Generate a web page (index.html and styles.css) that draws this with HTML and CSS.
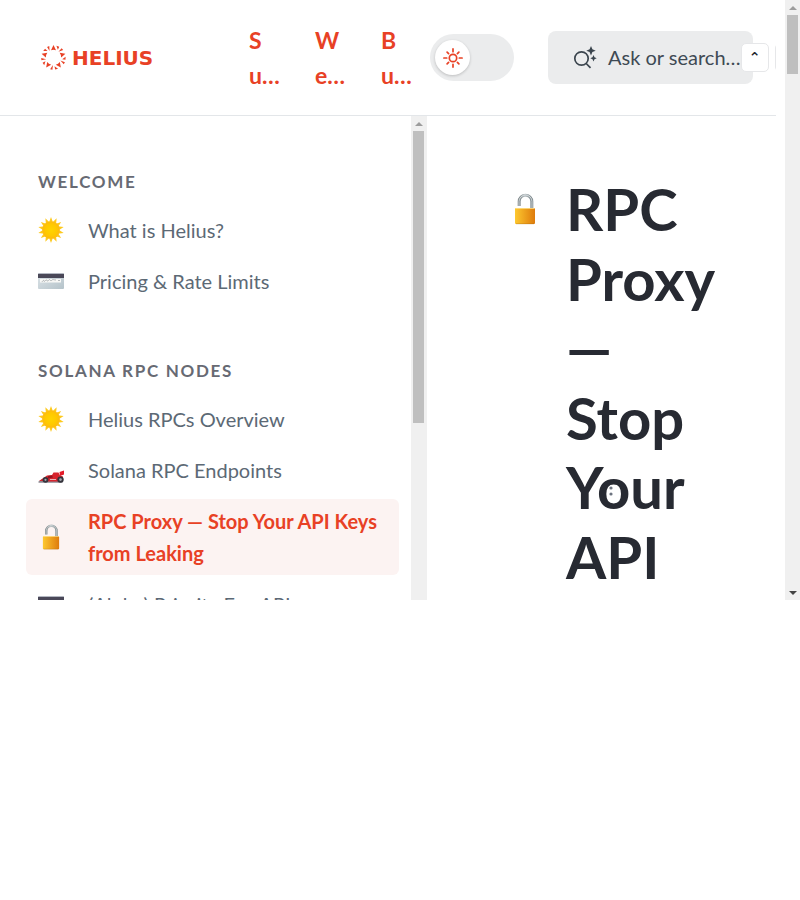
FILE: index.html
```html
<!DOCTYPE html>
<html lang="en">
<head>
<meta charset="utf-8">
<meta name="viewport" content="width=device-width, initial-scale=1">
<title>RPC Proxy | Helius Docs</title>
<link rel="stylesheet" href="styles.css">
</head>
<body>
<svg class="defs" aria-hidden="true">
  <defs>
    <linearGradient id="gold"><stop offset="0" stop-color="#fdc82f"/><stop offset="1" stop-color="#de7b0c"/></linearGradient>
    <linearGradient id="steel"><stop offset="0" stop-color="#7d8689"/><stop offset=".45" stop-color="#b9c1c4"/><stop offset="1" stop-color="#7d888c"/></linearGradient>
    <radialGradient id="sunfill"><stop offset="0" stop-color="#ffd400"/><stop offset=".7" stop-color="#ffc800"/><stop offset="1" stop-color="#fdb813"/></radialGradient>
    <linearGradient id="cardfill" x2="1" y2="1"><stop offset="0" stop-color="#dde4e8"/><stop offset="1" stop-color="#b5c3ca"/></linearGradient>
    <symbol id="sun" viewBox="0 0 26 26">
      <g fill="#fdc91c">
        <path id="spike" d="M13 0l2.200 6h-4.400zM13 26l2.200-6h-4.400z"/>
        <use href="#spike" transform="rotate(25.700 13 13)"/><use href="#spike" transform="rotate(51.400 13 13)"/>
        <use href="#spike" transform="rotate(77.100 13 13)"/><use href="#spike" transform="rotate(102.900 13 13)"/>
        <use href="#spike" transform="rotate(128.600 13 13)"/><use href="#spike" transform="rotate(154.300 13 13)"/>
      </g>
      <circle cx="13" cy="13" r="8.700" fill="url(#sunfill)"/>
    </symbol>
    <symbol id="card" viewBox="0 0 26 26">
      <rect y="5" width="26" height="16" rx="1" fill="url(#cardfill)"/>
      <path fill="#b4b8c2" d="M0 6a1 1 0 0 1 1-1h24a1 1 0 0 1 1 1z"/>
      <path fill="#4a4858" d="M0 6h26v4H0z"/>
      <path fill="#f8f8f6" d="M2 11h21v3.500H2z"/>
      <path fill="none" stroke="#8b9297" stroke-width=".6" d="M4 14c1-2 2-2 2-1s1 0 2-1 1 2 2 1 1-2 2-1 1 1 2 0 2 0 4 0M20 12.500h2"/>
    </symbol>
    <symbol id="lock" viewBox="0 0 32 32">
      <path fill="none" stroke="url(#steel)" stroke-width="3" d="M10.200 13V8.500a6.300 6.300 0 0 1 12.600 0v8"/>
      <path fill="none" stroke="#dfe5e7" stroke-width=".8" d="M10 13V8.500a6.500 6.500 0 0 1 13 0v8"/>
      <rect x="6" y="15" width="20" height="16" rx="1" fill="url(#gold)"/>
      <path fill="#ffe28a" d="M6.500 15h19v.8h-19z"/>
      <path fill="#a96509" opacity=".5" d="M7 30.500h18v.7H7z"/>
    </symbol>
    <symbol id="racer" viewBox="0 0 26 26">
      <path fill="#8b8790" d="M0 25l4-3h19l2 3-1 .8H1z"/>
      <path fill="#d7232d" d="M1 24l8-5.500 5-.5 1.500-2.500 5 0 1.500 3 3 1v5H8l-4-.5z"/>
      <path fill="#e31b29" d="M21.500 15l4.500-1.500v4l-4 1.500z"/>
      <path fill="#8f1621" d="M10 19l4-.5 1 2-5 1z"/>
      <circle cx="7.500" cy="22.800" r="2.900" fill="#34343c"/><circle cx="7.500" cy="22.800" r="1.100" fill="#a6a6af"/>
      <circle cx="22.500" cy="22.600" r="3.200" fill="#34343c"/><circle cx="22.500" cy="22.600" r="1.300" fill="#a6a6af"/>
      <path stroke="#f0d9dc" stroke-width=".8" d="M12 22.500h6"/>
    </symbol>
  </defs>
</svg>

<div class="frame">
  <div class="page">
    <header class="topbar">
      <a class="brand" href="#">
        <svg class="brand-mark" viewBox="0 0 24 24" aria-hidden="true">
          <g fill="#e84125">
            <path id="ray" d="M12 0l2.400 5q-2.400-.8-4.800 0z"/>
            <use href="#ray" transform="rotate(72 12 12)"/><use href="#ray" transform="rotate(144 12 12)"/>
            <use href="#ray" transform="rotate(216 12 12)"/><use href="#ray" transform="rotate(288 12 12)"/>
            <g id="pair"><path d="M14.800 .7l2.700 1-1.300 2.900zM19.800 3l1.500 1.700-4.600 1.800z"/></g>
            <use href="#pair" transform="rotate(72 12 12)"/><use href="#pair" transform="rotate(144 12 12)"/>
            <use href="#pair" transform="rotate(216 12 12)"/><use href="#pair" transform="rotate(288 12 12)"/>
          </g>
        </svg>
        <span>HELIUS</span>
      </a>
      <nav class="links">
        <a href="#">S<br>u…</a>
        <a href="#">W<br>e…</a>
        <a href="#">B<br>u…</a>
      </nav>
      <button class="theme" type="button" role="switch" aria-checked="false" aria-label="Dark mode">
        <span class="knob">
          <svg viewBox="0 0 20 20" aria-hidden="true" fill="none" stroke="#e84125" stroke-width="1.700" stroke-linecap="round">
            <circle cx="10" cy="10" r="3.700"/>
            <path d="M10 .9v2.800M10 16.300v2.800M.9 10h2.800M16.300 10h2.800M4.100 4.100l1.500 1.500M14.400 14.400l1.500 1.500M4.100 15.900l1.500-1.500M14.400 5.600l1.500-1.500"/>
          </svg>
        </span>
      </button>
      <button class="search" type="button">
        <svg viewBox="0 0 24 24" aria-hidden="true">
          <circle cx="8.500" cy="13.500" r="6.700" fill="none" stroke="#3b454e" stroke-width="1.700"/>
          <path d="M13.200 18.500l4.300 4.300" stroke="#3b454e" stroke-width="1.700"/>
          <path fill="#3b454e" d="M18 1l1.400 3.300L22.700 5.700l-3.300 1.400L18 10.400l-1.400-3.300-3.300-1.400 3.300-1.400zM20.500 10l1 2.200 2.200 1-2.200 1-1 2.200-1-2.200-2.200-1 2.200-1z"/>
        </svg>
        <span>Ask or search…</span>
        <span class="keys"><kbd>⌃</kbd><kbd></kbd></span>
      </button>
    </header>

    <aside class="sidebar">
      <nav class="toc">
        <section>
          <h2>Welcome</h2>
          <ul>
            <li><a href="#"><svg><use href="#sun"/></svg>What is Helius?</a></li>
            <li><a href="#"><svg><use href="#card"/></svg>Pricing &amp; Rate Limits</a></li>
          </ul>
        </section>
        <section>
          <h2>Solana RPC Nodes</h2>
          <ul>
            <li><a href="#"><svg><use href="#sun"/></svg>Helius RPCs Overview</a></li>
            <li><a href="#"><svg><use href="#racer"/></svg>Solana RPC Endpoints</a></li>
            <li><a class="current" href="#" aria-current="page"><svg><use href="#lock"/></svg>RPC Proxy — Stop Your API Keys from Leaking</a></li>
            <li><a href="#"><svg><use href="#card"/></svg>(Alpha) Priority Fee API</a></li>
          </ul>
        </section>
      </nav>
      <div class="scroll scroll-side"><i class="up"></i><i class="thumb"></i></div>
    </aside>

    <main class="content">
      <svg class="lead"><use href="#lock"/></svg>
      <h1>RPC Proxy — Stop Your API</h1>
      <svg class="dots" viewBox="0 0 4 12" aria-hidden="true"><circle cx="2" cy="3" r="1.600"/><circle cx="2" cy="9" r="1.600"/></svg>
    </main>
  </div>
  <div class="scroll scroll-page"><i class="up"></i><i class="thumb"></i><i class="down"></i></div>
</div>
</body>
</html>
```
FILE: styles.css
```css
* {
  box-sizing: border-box;
}

body {
  margin: 0;
  background: #fff;
  font-family: Lato, "Liberation Sans", sans-serif;
  font-size: 20px;
  line-height: 32px;
  color: #5c6975;
}

a {
  color: inherit;
  text-decoration: none;
}

button {
  border: 0;
  font: inherit;
  color: inherit;
}

.defs {
  position: absolute;
  width: 0;
  height: 0;
}

.frame {
  display: grid;
  grid-template-columns: minmax(0, 1fr) 15px;
  aspect-ratio: 4 / 3;
  overflow: hidden;
}

.page {
  display: grid;
  grid-template-columns: 427px minmax(0, 1fr);
  grid-template-rows: auto minmax(0, 1fr);
  min-height: 0;
}

/* Top bar */
.topbar {
  grid-column: 1 / -1;
  display: flex;
  align-items: center;
  height: 116px;
  margin-right: 9px;
  padding-left: 41px;
  border-bottom: 1px solid #e3e6e9;
  overflow: hidden;
}

.brand {
  display: flex;
  align-items: center;
  gap: 6px;
  flex: none;
  width: 208px;
  color: #e84125;
  font: bold 20px/24px "DejaVu Sans", sans-serif;
}

.brand-mark {
  width: 25px;
  height: 25px;
}

.links {
  display: flex;
  flex: none;
  gap: 34px;
  color: #e84125;
  font-size: 23px;
  font-weight: bold;
  line-height: 35px;
}

.links a {
  width: 32px;
  white-space: nowrap;
}

.theme {
  flex: none;
  width: 84px;
  height: 47px;
  margin-left: 17px;
  padding: 5px;
  border-radius: 24px;
  background: #ebeced;
}

.knob {
  display: grid;
  place-items: center;
  width: 35px;
  height: 35px;
  border-radius: 50%;
  background: #fff;
  box-shadow: 0 1px 3px #0003;
}

.knob svg {
  width: 20px;
  height: 20px;
}

.search {
  display: flex;
  align-items: center;
  flex: none;
  width: 205px;
  height: 53px;
  margin-left: 34px;
  padding: 0 0 1px 25px;
  border-radius: 8px;
  background: #ebeced;
  color: #3f4a54;
  white-space: nowrap;
}

.search svg {
  flex: none;
  width: 24px;
  height: 24px;
  margin-right: 11px;
}

.keys {
  display: flex;
  gap: 6px;
}

kbd {
  flex: none;
  width: 28px;
  height: 29px;
  border: 1px solid #e6e7e9;
  border-radius: 5px;
  background: #fff;
  color: #25282f;
  font: bold 14px/27px "DejaVu Sans", sans-serif;
  text-align: center;
}

/* Sidebar */
.sidebar {
  display: grid;
  grid-template-columns: minmax(0, 1fr) 16px;
  min-height: 0;
}

.toc {
  display: flex;
  flex-direction: column;
  gap: 56px;
  min-height: 0;
  padding: 54px 12px 0 26px;
  overflow: hidden;
}

.toc section {
  flex: none;
}

.toc h2 {
  margin: 0 0 14px;
  padding-left: 12px;
  color: #676a73;
  font-size: 17px;
  line-height: 24px;
  letter-spacing: 0.1em;
  text-transform: uppercase;
}

.toc ul {
  display: flex;
  flex-direction: column;
  gap: 7px;
  margin: 0;
  padding: 0;
  list-style: none;
}

.toc a {
  display: flex;
  align-items: center;
  gap: 24px;
  padding: 6px 12px;
  border-radius: 6px;
}

.toc svg {
  flex: none;
  width: 26px;
  height: 26px;
}

.toc .current {
  background: #fcf3f2;
  color: #e84125;
  font-weight: bold;
}

/* Article */
.content {
  position: relative;
  display: flex;
  align-items: flex-start;
  gap: 25px;
  min-height: 0;
  padding: 58px 50px 0 82px;
  overflow: hidden;
}

.lead {
  flex: none;
  width: 32px;
  height: 32px;
  margin-top: 19px;
}

h1 {
  margin: 0;
  color: #272a32;
  font-size: 58px;
  line-height: 1.2;
}

.dots {
  position: absolute;
  top: 369px;
  left: 182px;
  width: 4px;
  height: 12px;
  fill: #6d7480;
}

/* Scroll tracks */
.scroll {
  display: flex;
  flex-direction: column;
  align-items: center;
  background: #f0f0f0;
}

.scroll-side {
  padding-right: 1px;
}

.scroll .thumb {
  width: 11px;
  background: #bfbfbf;
}

.scroll-side .thumb {
  height: 60.3%;
}

.scroll-page .thumb {
  height: 59px;
}

.up,
.down {
  display: grid;
  place-items: center;
  height: 15px;
}

.up::before,
.down::before {
  content: "";
  border: 4px solid transparent;
}

.up::before {
  border-top: 0;
  border-bottom-color: #9c9c9c;
}

.down {
  margin-top: auto;
}

.down::before {
  border-bottom: 0;
  border-top-color: #444;
}
```
